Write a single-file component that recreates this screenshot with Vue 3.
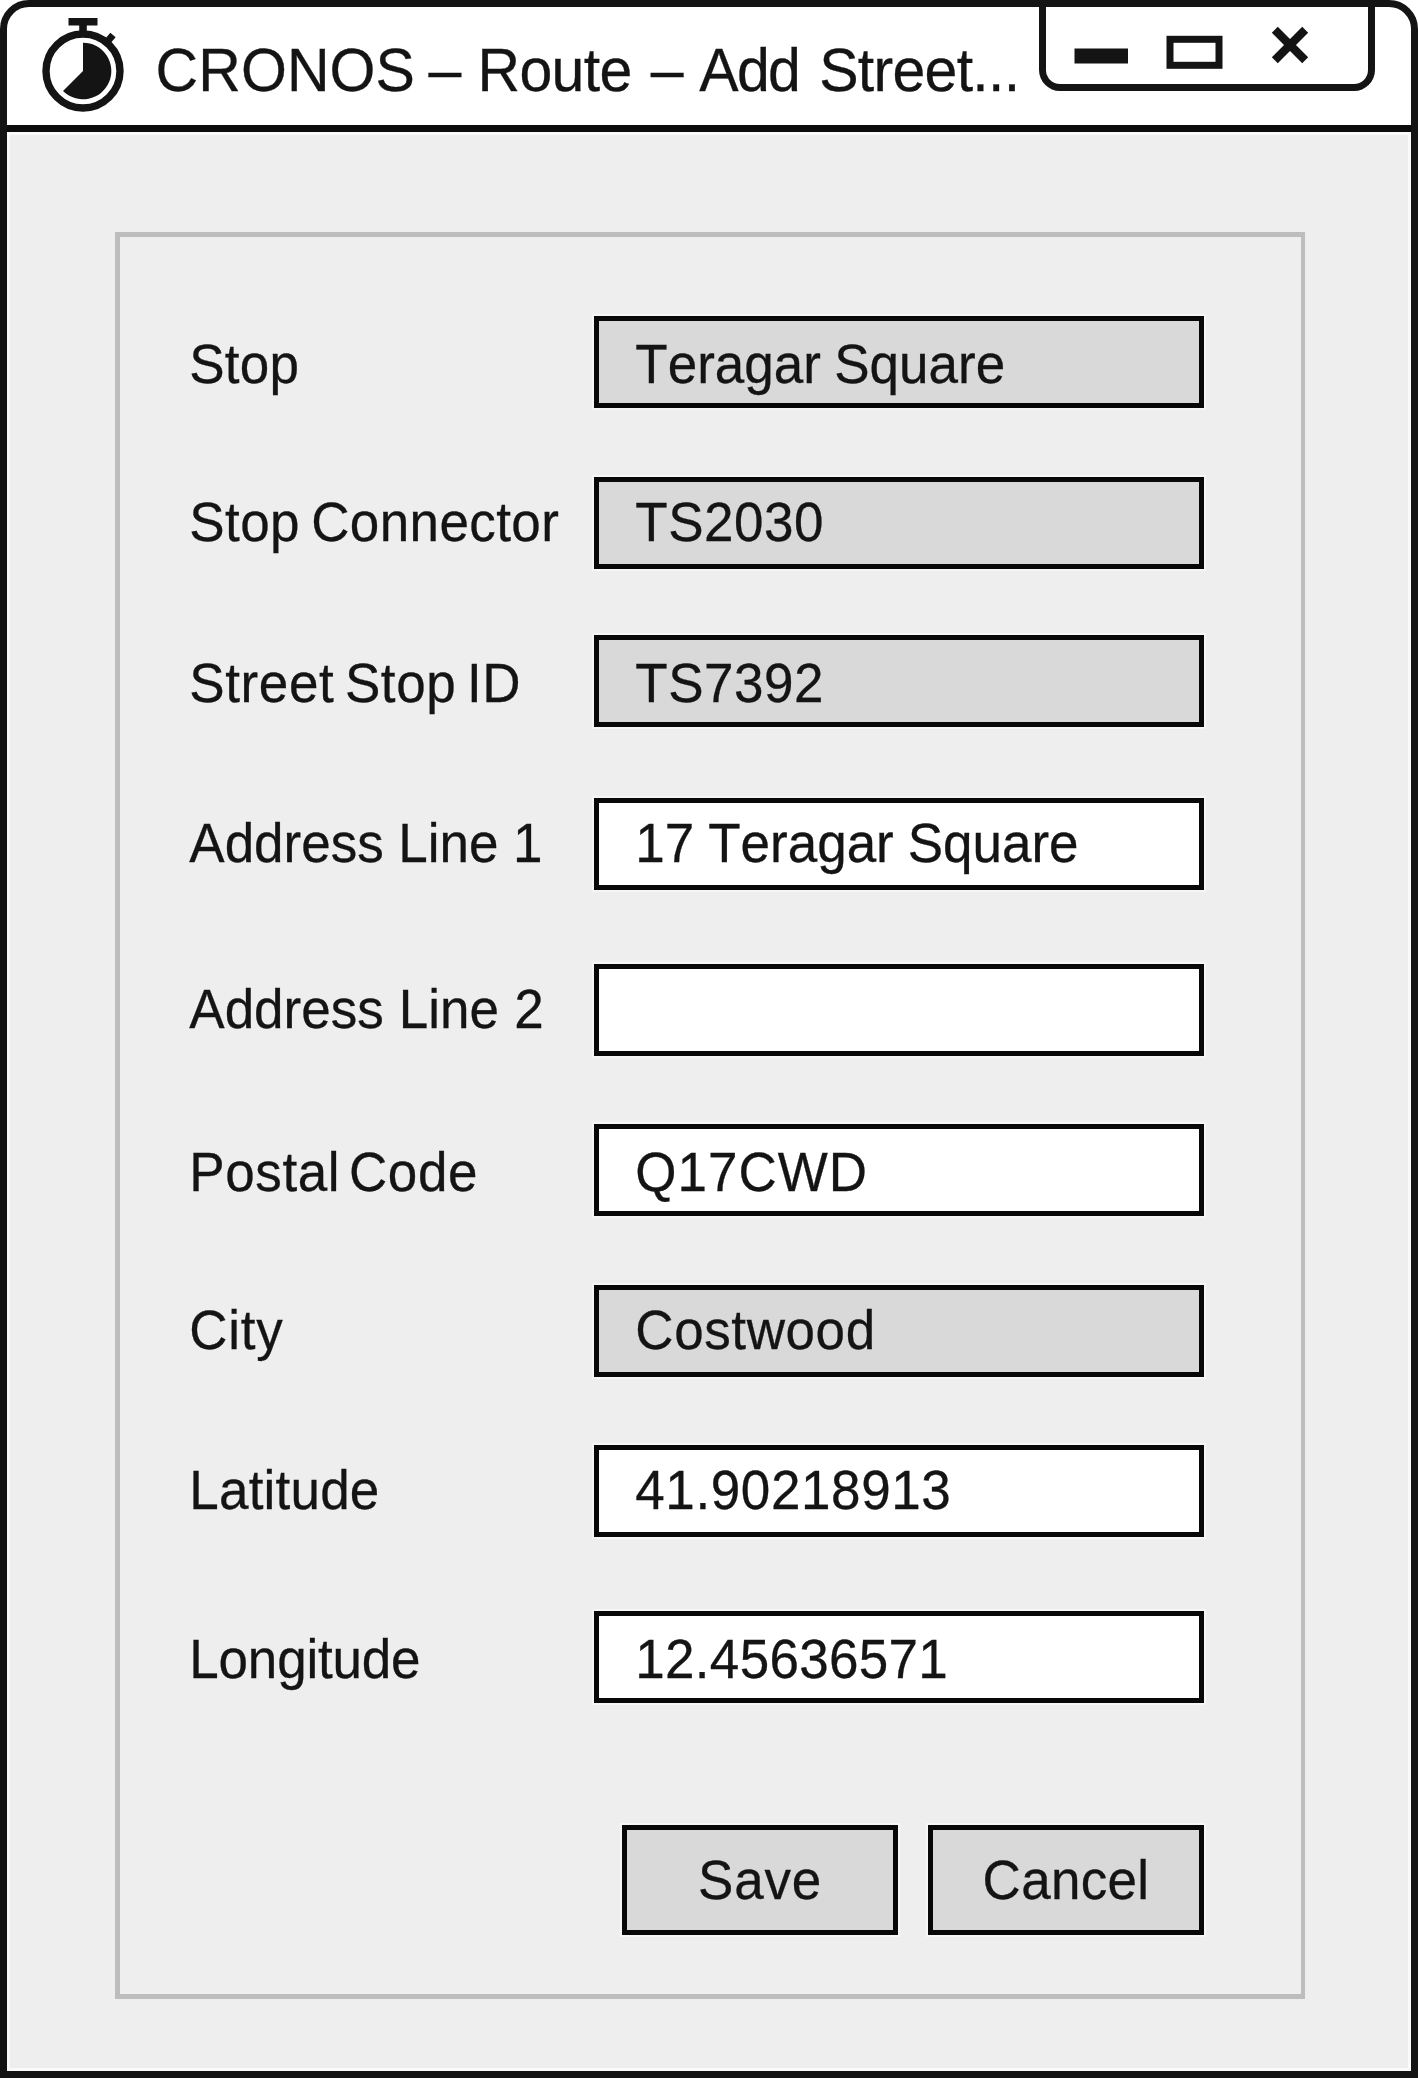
<script setup>
const titleWords = [
  { text: 'CRONOS', tracking: 0.1, after: 13.4 },
  { text: '–', tracking: 0, after: 16.1 },
  { text: 'Route', tracking: -0.6, after: 19 },
  { text: '–', tracking: 0, after: 15.5 },
  { text: 'Add', tracking: -1.6, after: 19.8 },
  { text: 'Street...', tracking: -0.7, after: 0 }
]

const fields = [
  { label: 'Stop', value: 'Teragar Square', locked: true, low: true, gap: 79, l: [0.2, 0], v: [0, -1.4] },
  { label: 'Stop Connector', value: 'TS2030', locked: true, low: false, gap: 69, l: [0.4, -3.9], v: [0.5, 0] },
  { label: 'Street Stop ID', value: 'TS7392', locked: true, low: true, gap: 66, l: [0.6, -4.7], v: [0.5, 0] },
  { label: 'Address Line 1', value: '17 Teragar Square', locked: false, low: false, gap: 71, l: [0, -0.2], v: [0, -0.8] },
  { label: 'Address Line 2', value: '', locked: false, low: false, gap: 74, l: [0, 0.4], v: [0, 0] },
  { label: 'Postal Code', value: 'Q17CWD', locked: false, low: true, gap: 68, l: [0.6, -6.6], v: [1, 0] },
  { label: 'City', value: 'Costwood', locked: true, low: false, gap: 69, l: [0.7, 0], v: [0.6, 0] },
  { label: 'Latitude', value: '41.90218913', locked: false, low: false, gap: 68, l: [0.2, 0], v: [0.6, 0] },
  { label: 'Longitude', value: '12.45636571', locked: false, low: true, gap: 74, l: [-0.2, 0], v: [0.3, 0] }
]

const spacing = ([letter, word]) => ({ letterSpacing: letter + 'px', wordSpacing: word + 'px' })
</script>

<template>
  <main class="window">
    <header class="titlebar">
      <svg class="logo" viewBox="0 0 84 96" width="84" height="96" aria-hidden="true">
        <circle cx="43" cy="53" r="37" fill="none" stroke="#141414" stroke-width="7.4" />
        <path d="M28.5 0h29v7.5H46.8V14H39.2V7.5H28.5z" fill="#141414" />
        <path d="M66.5 24.5 73 17" fill="none" stroke="#141414" stroke-width="7" />
        <path d="M43 24.7A28.3 28.3 0 1 1 23 73L43 53z" fill="#141414" />
      </svg>
      <h1 class="title">
        <span
          v-for="(word, i) in titleWords"
          :key="i"
          :style="{ letterSpacing: word.tracking + 'px', marginRight: word.after + 'px' }"
        >{{ word.text }}</span>
      </h1>
      <div class="controls">
        <svg viewBox="0 0 322 77" width="322" height="77" fill="none" stroke="#141414">
          <rect x="28.5" y="41.5" width="53.5" height="15" fill="#141414" stroke="none" />
          <rect x="124" y="32.3" width="49" height="26" stroke-width="7" />
          <path d="M228.8 22.8 259.2 53.2M259.2 22.8 228.8 53.2" stroke-width="8.4" />
        </svg>
      </div>
    </header>

    <section class="body">
      <form class="panel" @submit.prevent>
        <div
          v-for="field in fields"
          :key="field.label"
          class="row"
          :class="{ low: field.low }"
          :style="{ marginTop: field.gap + 'px' }"
        >
          <label class="label"><span class="text" :style="spacing(field.l)">{{ field.label }}</span></label>
          <div class="input" :class="{ locked: field.locked }">
            <span class="text" :style="spacing(field.v)">{{ field.value }}</span>
          </div>
        </div>
        <div class="actions">
          <button type="button" class="button save"><span class="text">Save</span></button>
          <button type="button" class="button cancel"><span class="text">Cancel</span></button>
        </div>
      </form>
    </section>
  </main>
</template>

<style>
body {
  margin: 0;
  background: #fff;
}
</style>

<style scoped>
.window {
  box-sizing: border-box;
  display: flex;
  flex-direction: column;
  width: 1418px;
  height: 2078px;
  border: 7px solid #141414;
  border-radius: 29px 29px 0 0;
  background: #fff;
  color: #141414;
  font-family: "Liberation Sans", Arial, sans-serif;
  font-kerning: none;
  overflow: hidden;
}

.titlebar {
  box-sizing: border-box;
  display: flex;
  align-items: flex-start;
  flex: none;
  height: 125px;
  border-bottom: 7px solid #0c0c0c;
}

.logo {
  flex: none;
  margin: 11px 0 0 33px;
}

.title {
  display: flex;
  flex: none;
  width: 883px;
  margin: 0 0 0 31.5px;
  padding-top: 29px;
  font-size: 59px;
  font-weight: 400;
  line-height: 70px;
  white-space: nowrap;
  -webkit-text-stroke: 0.3px #141414;
  transform: scaleY(1.03);
  transform-origin: 0 84px;
}

.controls {
  box-sizing: border-box;
  flex: none;
  width: 336px;
  height: 84px;
  overflow: hidden;
  border: 7px solid #141414;
  border-top: 0;
  border-radius: 0 0 21px 21px;
}

.controls svg {
  display: block;
}

.body {
  display: flex;
  flex: 1;
  align-items: flex-start;
  padding: 100px 0 0 108px;
  background: #eee;
  box-shadow: inset 0 0 0 3px #fafafa;
}

.panel {
  box-sizing: border-box;
  display: flex;
  flex-direction: column;
  width: 1190px;
  height: 1767px;
  border: 5px solid #bdbdbd;
  border-right-width: 4px;
}

.row {
  display: flex;
  flex: none;
  height: 92px;
}

.label {
  box-sizing: border-box;
  flex: none;
  width: 474px;
  padding: 5px 0 0 69.3px;
}

.input {
  box-sizing: border-box;
  width: 610px;
  height: 92px;
  padding-left: 36.3px;
  border: 5px solid #080808;
  background: #fff;
  box-shadow: 0 0 0 2px #f6f6f6;
}

.input.locked,
.button {
  background: #d9d9d9;
}

.text {
  display: inline-block;
  font-size: 53px;
  line-height: 82px;
  white-space: nowrap;
  -webkit-text-stroke: 0.3px #141414;
  transform: scaleY(1.03);
  transform-origin: 0 59.4px;
}

.low .text {
  margin-top: 3px;
}

.actions {
  display: flex;
  gap: 30px;
  flex: none;
  margin: 122px 0 0 502px;
}

.button {
  box-sizing: border-box;
  width: 276px;
  height: 110px;
  padding: 2px 0 0;
  border: 5px solid #080808;
  box-shadow: 0 0 0 2px #f6f6f6;
  color: inherit;
  font-family: inherit;
  font-kerning: none;
}

.save .text {
  letter-spacing: 0.8px;
}

.cancel .text {
  letter-spacing: 0.3px;
}
</style>
